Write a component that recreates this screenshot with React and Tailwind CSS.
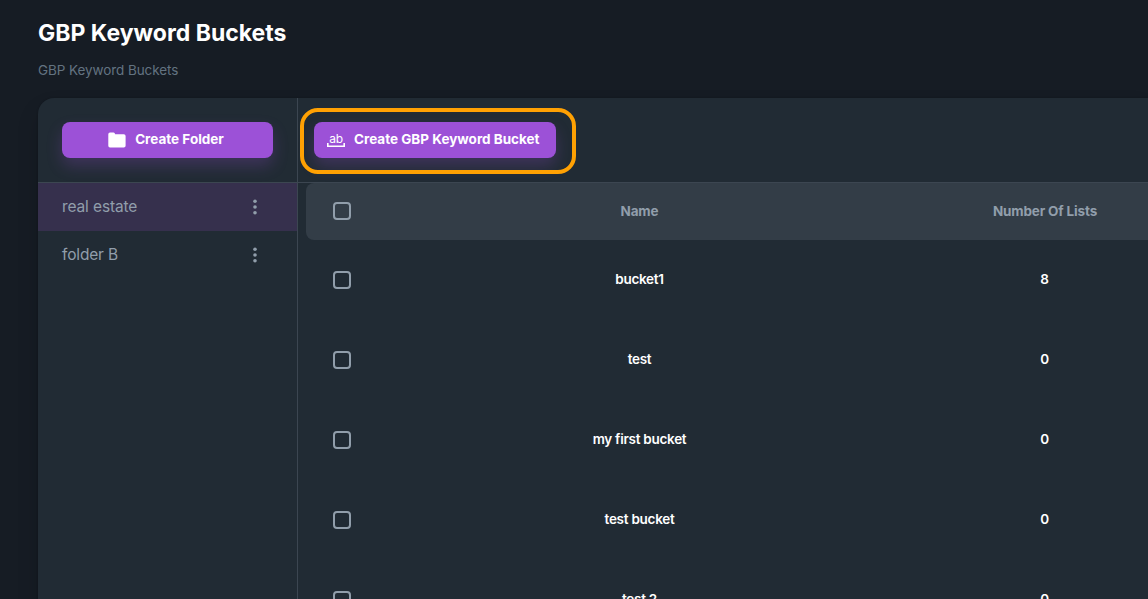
const folders = [
  { name: "real estate", active: true, cls: "tracking-[-0.12px]" },
  { name: "folder B", active: false, cls: "tracking-[-0.15px]" },
];

const buckets = [
  { name: "bucket1", lists: 8 },
  { name: "test", lists: 0 },
  { name: "my first bucket", lists: 0 },
  { name: "test bucket", lists: 0 },
  { name: "test 2", lists: 0 },
];

function FolderIcon() {
  return (
    <svg width="18" height="16" viewBox="0 0 18 16" fill="currentColor" className="shrink-0">
      <path d="M2 0.5H5.5Q6.3 0.5 6.7 1.2L7.2 2.2H15.8Q17.6 2.2 17.6 4V13.7Q17.6 15.5 15.8 15.5H2Q.3 15.5 .3 13.7V2.2Q.3.5 2 .5Z" />
    </svg>
  );
}

function AbIcon() {
  return (
    <span className="flex h-[13px] w-[18px] shrink-0 flex-col items-center text-[12px] leading-[10px] tracking-[-0.3px]">
      <span className="h-[9px] font-normal">ab</span>
      <svg width="18" height="4" viewBox="0 0 18 4" fill="none" stroke="currentColor" strokeWidth="1.6" className="shrink-0">
        <path d="M.8 0V3.2H17.2V0" />
      </svg>
    </span>
  );
}

function Dots() {
  return (
    <svg width="6" height="16" viewBox="0 0 6 16" fill="currentColor">
      <circle cx="3" cy="2.2" r="1.8" />
      <circle cx="3" cy="8" r="1.8" />
      <circle cx="3" cy="13.8" r="1.8" />
    </svg>
  );
}

function Checkbox() {
  return (
    <div className="flex w-[72px] shrink-0 justify-center">
      <span className="h-[18px] w-[18px] rounded-[4px] border-2 border-[#919eab]" />
    </div>
  );
}

export default function App() {
  return (
    <div className="flex h-[599px] flex-col overflow-hidden bg-[#161c24] pl-[38px] font-['Inter',sans-serif] text-white">
      <header className="h-[98px] shrink-0 pt-[15px]">
        <h1 className="text-[23px] font-bold leading-9 whitespace-nowrap">GBP Keyword Buckets</h1>
        <p className="mt-[8px] text-[13.5px] leading-[22px] tracking-[-0.08px] text-[#637381]">GBP Keyword Buckets</p>
      </header>

      <main className="flex flex-1 rounded-tl-[16px] bg-[#212b34] shadow-[0_0_2px_rgba(0,0,0,0.24),0_12px_24px_-4px_rgba(0,0,0,0.24)]">
        <aside className="flex w-[260px] shrink-0 flex-col border-r border-[#3c4651]">
          <div className="h-[85px] border-b border-[#3c4651] px-6 pt-6">
            <button className="flex h-9 w-[211px] items-center justify-center gap-[9px] rounded-lg bg-[#9c51d7] pr-[3px] text-[13.5px] font-bold shadow-[0_8px_16px_0_rgba(156,81,215,0.24)]">
              <FolderIcon />
              <span className="pb-[2px] whitespace-nowrap">Create Folder</span>
            </button>
          </div>
          {folders.map((f) => (
            <div
              key={f.name}
              className={`flex h-12 items-center justify-between pl-6 pr-[39px] text-[#919eab] ${f.active ? "bg-[#36304d]" : ""}`}
            >
              <span className={`text-[15.5px] leading-6 ${f.cls}`}>{f.name}</span>
              <Dots />
            </div>
          ))}
        </aside>

        <section className="flex min-w-0 flex-1 flex-col overflow-hidden">
          <div className="relative h-[85px] shrink-0 border-b border-[#3c4651] pl-4 pt-6">
            <button className="flex h-9 w-[242px] items-center gap-[9px] rounded-lg bg-[#9c51d7] pl-[13px] text-[13.5px] font-bold shadow-[0_8px_16px_0_rgba(156,81,215,0.24)]">
              <AbIcon />
              <span className="pb-[2px] whitespace-nowrap">Create GBP Keyword Bucket</span>
            </button>
            <div className="absolute left-[2px] top-[10px] h-[66px] w-[276px] rounded-[18px] border-4 border-[#ffa103]" />
          </div>

          <div className="ml-2 flex h-[57px] shrink-0 items-center rounded-l-lg bg-[#333d47] pb-px text-[13.5px] font-bold tracking-[-0.15px] text-[#919eab]">
            <Checkbox />
            <div className="w-[523px] shrink-0 pt-px text-center">Name</div>
            <div className="w-[288px] shrink-0 pt-px text-center">Number Of Lists</div>
          </div>
          {buckets.map((b) => (
            <div key={b.name} className="ml-2 flex h-20 shrink-0 items-center text-[13.5px] font-semibold tracking-[-0.27px]">
              <Checkbox />
              <div className="w-[523px] shrink-0 pb-[2px] text-center">{b.name}</div>
              <div className="w-[287px] shrink-0 pb-[2px] text-center">{b.lists}</div>
            </div>
          ))}
        </section>
      </main>
    </div>
  );
}
